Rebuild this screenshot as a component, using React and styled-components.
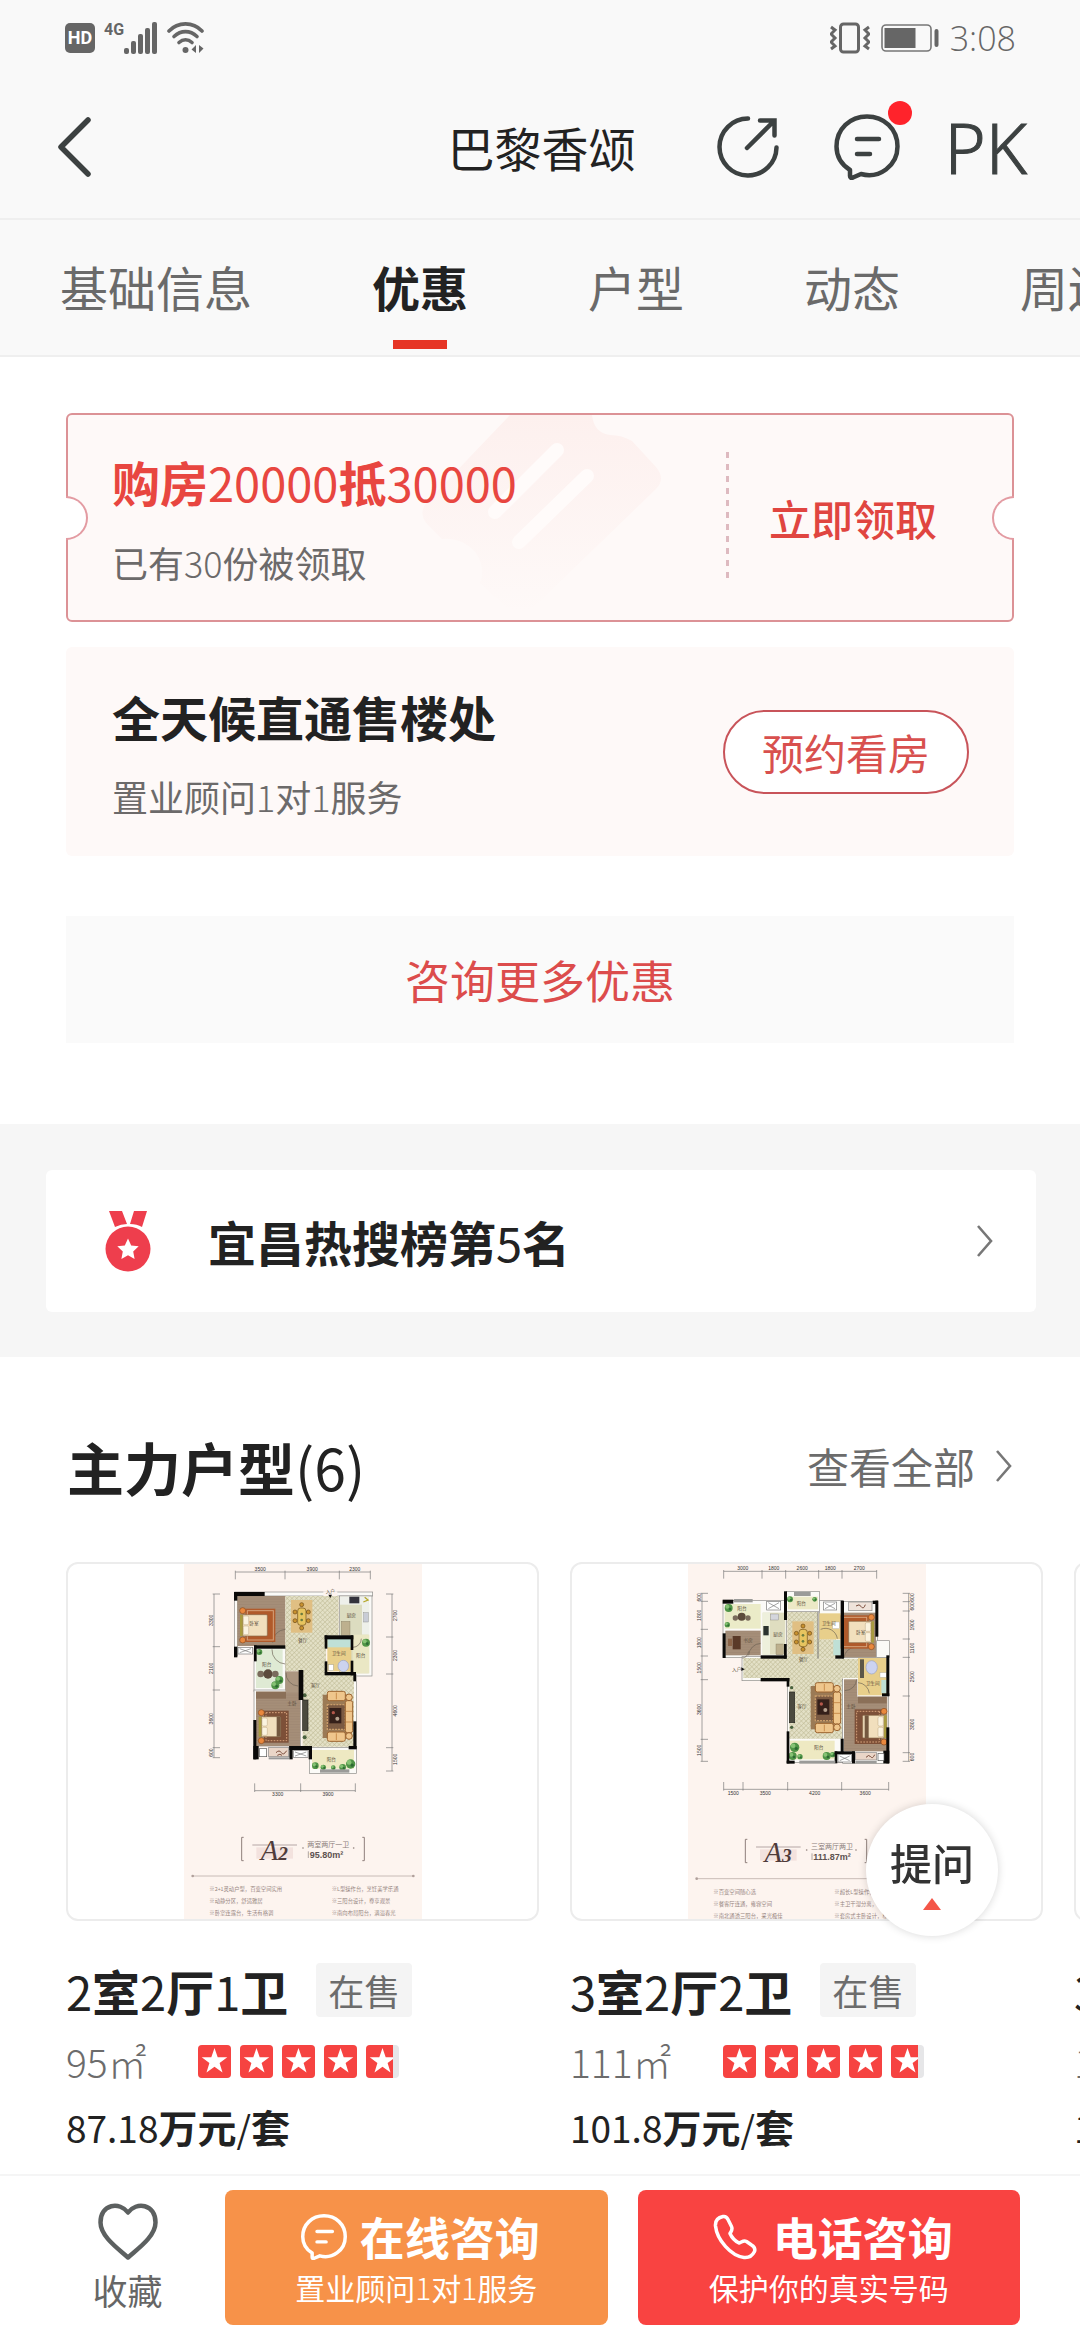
import React from "react";
import styled, { createGlobalStyle } from "styled-components";

const sans = `"Noto Sans CJK SC", "Noto Sans", sans-serif`;

const GlobalStyle = createGlobalStyle`
    * {
        box-sizing: border-box;
    }
    body {
        margin: 0;
        background: #fff;
        color: #222;
        font-family: ${sans};
    }
    button {
        font-family: inherit;
        color: inherit;
        padding: 0;
        border: none;
        background: none;
        cursor: pointer;
    }
    a {
        color: inherit;
        text-decoration: none;
    }
    h1, h2, h3, p {
        margin: 0;
    }
    svg {
        display: block;
        flex: none;
    }
`;

const Page = styled.div`
    min-height: 100vh;
    display: flex;
    flex-direction: column;
    overflow: hidden;
`;

const StatusBar = styled.div`
    height: 74px;
    padding: 2px 64px 0 65px;
    display: flex;
    align-items: center;
    justify-content: space-between;
    background: #f9f9f9;
    color: #666;
`;

const StatusGroup = styled.div`
    display: flex;
    align-items: center;
    gap: ${(p) => p.$gap}px;
`;

const HdBadge = styled.span`
    width: 30px;
    height: 30px;
    border-radius: 5px;
    background: #666;
    color: #fff;
    font: 700 18px/30px "Roboto", sans-serif;
    text-align: center;
`;

const Network = styled.span`
    display: flex;
    align-items: flex-start;
    font: 700 16px/16px "Roboto", sans-serif;
`;

const Clock = styled.time`
    font: 300 34px/40px "Open Sans", sans-serif;
`;

const Header = styled.header`
    height: 146px;
    padding: 2px 53px 0 56px;
    display: grid;
    grid-template-columns: 1fr auto 1fr;
    align-items: center;
    background: #f9f9f9;
    border-bottom: 2px solid #efefef;
`;

const HeaderTitle = styled.h1`
    font-size: 47px;
    line-height: 64px;
    font-weight: 400;
`;

const HeaderActions = styled.div`
    display: flex;
    align-items: center;
    justify-content: flex-end;
    gap: 55px;
`;

const IconButton = styled.button`
    position: relative;
    display: block;
    color: #3c4141;
`;

const UnreadDot = styled.span`
    position: absolute;
    top: -13px;
    right: -12px;
    width: 24px;
    height: 24px;
    border-radius: 50%;
    background: #ff232b;
`;

const PkButton = styled(IconButton)`
    margin-left: -10px;
    font: 300 70px/72px "Noto Sans", "Open Sans", sans-serif;
    -webkit-text-stroke: 1px #3c4141;
`;

const Tabs = styled.nav`
    display: flex;
    gap: 120px;
    padding: 34px 60px 6px;
    overflow: hidden;
    background: #f9f9f9;
    border-bottom: 2px solid #efefef;
`;

const Tab = styled.a`
    flex: none;
    display: flex;
    flex-direction: column;
    align-items: center;
    gap: 22px;
    font-size: 48px;
    line-height: 64px;
    font-weight: ${(p) => (p.$active ? 700 : 400)};
    color: ${(p) => (p.$active ? "#222" : "#6a6a6a")};

    &::after {
        content: "";
        width: 54px;
        height: 9px;
        background: ${(p) => (p.$active ? "#e63525" : "transparent")};
    }
`;

const Offers = styled.section`
    padding: 56px 66px 81px;
    display: flex;
    flex-direction: column;
    gap: 25px;
`;

const OfferCard = styled.div`
    position: relative;
    height: 209px;
    display: flex;
    align-items: center;
    padding-left: ${(p) => (p.$coupon ? 44 : 46)}px;
    border-radius: 6px;
    border: ${(p) => (p.$coupon ? "2px solid #dc9296" : "none")};
    background: #fef9f8;
`;

const Notch = styled.span`
    position: absolute;
    top: 81px;
    ${(p) => p.$side}: -2px;
    width: 22px;
    height: 44px;
    background: #fff;
    border: 2px solid #e39ba2;
    border-${(p) => p.$side}: none;
    border-radius: ${(p) => (p.$side === "left" ? "0 22px 22px 0" : "22px 0 0 22px")};
`;

// sits behind the coupon text
const Watermark = styled.svg`
    position: absolute;
    left: 340px;
    top: 0;
`;

const OfferText = styled.div`
    position: relative;
    flex: 1;
    display: flex;
    flex-direction: column;
    gap: 24px;
`;

const Title = styled.h3`
    font-size: 48px;
    line-height: 64px;
    font-weight: 700;
    color: ${(p) => (p.$red ? "#e84640" : "#222")};
    white-space: nowrap;
`;

const Num = styled.span`
    font-size: 47px;
    font-weight: 400;
`;

const Thin = styled.span`
    font-weight: 300;
`;

const Sub = styled.p`
    font-size: 36px;
    line-height: 48px;
    color: #6c6a6a;
`;

const DashedLine = styled.span`
    width: 3px;
    height: 126px;
    margin-bottom: 5px;
    background: repeating-linear-gradient(#debac0 0 6px, transparent 6px 12px);
`;

const ClaimButton = styled.button`
    position: relative;
    padding: 0 75px 0 40px;
    font-size: 42px;
    line-height: 56px;
    font-weight: 500;
    color: #e04540;
`;

const BookButton = styled.button`
    width: 246px;
    height: 84px;
    margin-right: 45px;
    border: 2px solid #c8545a;
    border-radius: 42px;
    background: #fff;
    color: #d8504e;
    font-size: 42px;
`;

const MoreButton = styled.button`
    height: 127px;
    margin-top: 35px;
    background: #fafafa;
    color: #dc4c4c;
    font-size: 45px;
`;

const Band = styled.section`
    padding: 46px 44px 45px 46px;
    background: #f6f6f6;
`;

const RankLink = styled.a`
    display: flex;
    align-items: center;
    height: 142px;
    padding: 0 42px 0 58px;
    border-radius: 6px;
    background: #fff;
`;

const RankText = styled.span`
    flex: 1;
    margin-left: 56px;
    font-size: 48px;
    line-height: 64px;
    font-weight: 700;
`;

const Section = styled.section`
    flex: 1;
    padding: 69px 0 8px 66px;
`;

const SectionHead = styled.div`
    display: flex;
    align-items: center;
    justify-content: space-between;
    height: 80px;
    padding: 0 67px 0 1px;
    margin-bottom: 56px;
`;

const SectionTitle = styled.h2`
    font-size: 57px;
    line-height: 80px;
    font-weight: 700;

    span {
        font-weight: 400;
    }
`;

const AllLink = styled.a`
    display: flex;
    align-items: center;
    gap: 20px;
    font-size: 42px;
    line-height: 56px;
    color: #6c6c6c;
`;

const Carousel = styled.div`
    display: flex;
    gap: 31px;
    padding-bottom: 12px;
    overflow: hidden;
`;

const House = styled.article`
    flex: none;
    width: 473px;
`;

const PlanBox = styled.div`
    height: 359px;
    display: flex;
    justify-content: center;
    border: 2px solid #ececec;
    border-radius: 12px;
    overflow: hidden;
`;

const HouseRow = styled.div`
    display: flex;
    align-items: center;
    height: ${(p) => p.$height}px;
    margin-top: ${(p) => p.$top}px;
    gap: ${(p) => p.$gap}px;
`;

const Tag = styled.span`
    padding: 0 12px;
    border-radius: 4px;
    background: #f4f4f4;
    color: #6c6c6c;
    font-size: 36px;
    line-height: 54px;
`;

const Area = styled.span`
    font-size: 39px;
    line-height: 48px;
    font-weight: 300;
    color: #6c6c6c;
`;

const Price = styled.p`
    margin-top: 17px;
    font-size: 39px;
    line-height: 48px;
    font-weight: 700;

    span {
        font-size: 37px;
        font-weight: 400;
    }
`;

const AskButton = styled.button`
    position: fixed;
    right: 82px;
    bottom: 404px;
    width: 132px;
    height: 132px;
    padding-top: 4px;
    display: flex;
    flex-direction: column;
    align-items: center;
    justify-content: center;
    gap: 8px;
    border-radius: 50%;
    background: #fff;
    box-shadow: 0 0 8px rgba(0, 0, 0, 0.16);
    color: #333;
    font-size: 42px;
    line-height: 56px;
    font-weight: 500;
`;

const BottomBar = styled.footer`
    display: flex;
    gap: 30px;
    padding: 14px 60px 15px;
    border-top: 2px solid #f5f5f5;
    background: #fff;
`;

const FavButton = styled.button`
    width: 135px;
    padding-top: 12px;
    display: flex;
    flex-direction: column;
    align-items: center;
    gap: 6px;
    color: #666;
    font-size: 35px;
    line-height: 48px;
`;

const CallButton = styled.button`
    flex: 1;
    height: 135px;
    padding-bottom: 2px;
    display: flex;
    flex-direction: column;
    align-items: center;
    justify-content: center;
    border-radius: 8px;
    background: ${(p) => p.$color};
    color: #fff;
    font-size: 30px;
    line-height: 40px;
`;

const CallTitle = styled.strong`
    display: flex;
    align-items: center;
    gap: ${(p) => p.$gap}px;
    padding-left: 8px;
    font-size: 45px;
    line-height: 60px;
    font-weight: 700;
`;

const SignalIcon = () => (
    <svg width="34" height="32" viewBox="0 0 34 32" fill="#666">
        <rect x="0" y="26" width="5" height="6" rx="2" />
        <rect x="7" y="19" width="5" height="13" rx="2" />
        <rect x="14" y="12" width="5" height="20" rx="2" />
        <rect x="21" y="6" width="5" height="26" rx="2" />
        <rect x="28" y="0" width="5" height="32" rx="2" />
    </svg>
);

const WifiIcon = () => (
    <svg width="38" height="32" viewBox="0 0 38 32" fill="none" stroke="#666" strokeWidth="3.6" strokeLinecap="round">
        <path d="M2 9C11-.5 26-.5 35 9" />
        <path d="M7 14.5c7-6.5 16-6.5 23 0" />
        <path d="M12 20.5c4-3.5 9-3.5 13 0" />
        <circle cx="18.5" cy="28" r="3" fill="#666" stroke="none" />
        <path d="M29 23v8l-4.500-3.500zM32 23v8l4.500-4.500z" fill="#666" stroke="none" />
    </svg>
);

const VibrateIcon = () => (
    <svg width="40" height="32" viewBox="0 0 40 32" fill="none" stroke="#666" strokeWidth="3">
        <rect x="10.5" y="2" width="18" height="28" rx="3" />
        <path d="M1 5l4 3-4 4 4 4-4 4 4 4-4 3" />
        <path d="M39 5l-4 3 4 4-4 4 4 4-4 4 4 3" />
    </svg>
);

const BatteryIcon = () => (
    <svg width="58" height="28" viewBox="0 0 58 28">
        <rect x="1" y="1" width="49" height="26" rx="4" fill="none" stroke="#777" strokeWidth="1.6" />
        <rect x="3.5" y="4" width="31" height="20" fill="#666" />
        <rect x="53.5" y="5" width="4" height="18" rx="2" fill="#666" />
    </svg>
);

const BackIcon = () => (
    <svg width="36" height="60" viewBox="0 0 36 60" fill="none" stroke="currentColor" strokeWidth="5.5" strokeLinecap="round" strokeLinejoin="round">
        <path d="M32 3L5 30l27 27" />
    </svg>
);

const ShareIcon = () => (
    <svg width="62" height="62" viewBox="0 0 62 62" fill="none" stroke="currentColor" strokeWidth="4.5" strokeLinecap="round">
        <path d="M31 2.500a28.500 28.500 0 1 0 28.500 29" />
        <path d="M30 32L57 5M43 4.500h14.500v15" />
    </svg>
);

const ChatIcon = ({ size = 66, stroke = 4.5 }) => (
    <svg width={size} height={size} viewBox="0 0 66 66" fill="none" stroke="currentColor" strokeWidth={stroke} strokeLinecap="round" strokeLinejoin="round">
        <path d="M16 56v6q0 2.500 3 1.500l8-3.500C45 65 63.500 52 63.500 32.500 63.500 15 50 2.500 33 2.500S2.500 15 2.500 32.500c0 10 5 18 13.500 23.500z" />
        <path d="M23 25h22M23 40h13" />
    </svg>
);

const ChevronIcon = () => (
    <svg width="18" height="32" viewBox="0 0 18 32" fill="none" stroke="#777" strokeWidth="2.6">
        <path d="M2 1l13 15L2 31" />
    </svg>
);

const starPath = "M16.5 3l3.200 9.200h9.600l-7.700 5.800 2.900 9.400-8-5.600-8 5.600 2.900-9.400L3.700 12.200h9.600z";

const MedalIcon = () => (
    <svg width="48" height="62" viewBox="0 0 48 62" fill="#ee3e4d">
        <path d="M5 1h13l5 13q-6 0-12 3zM30 1h13l-5 16q-5-3-12-3z" />
        <circle cx="24" cy="39" r="22.5" />
        <path d="M24 28.500l3.200 6.900 7.500.9-5.500 5.200 1.400 7.500-6.600-3.700-6.600 3.700 1.400-7.500-5.500-5.200 7.500-.9z" fill="#fff" />
    </svg>
);

const HeartIcon = () => (
    <svg width="60" height="58" viewBox="0 0 60 58" fill="none" stroke="#5c6060" strokeWidth="4.5" strokeLinejoin="round">
        <path d="M30 10.500C22-.5 2.500 1.500 2.500 20.500 2.500 35 22 48 30 55.500 38 48 57.500 35 57.500 20.500 57.500 1.500 38-.5 30 10.500z" />
    </svg>
);

const PhoneIcon = () => (
    <svg width="44" height="46" viewBox="0 0 44 46" fill="none" stroke="#fff" strokeWidth="3.5" strokeLinejoin="round">
        <path d="M10 2.500C5 3.500 2 6 2.500 12c1.500 14 15.500 30 28.500 31.500 5 .5 8-1 10.500-6 1-3-.5-5-3-6.500l-5-3.500c-3-1.500-4.500.5-7.500 1.500-4-2-7-5-9-9.500 1.500-2.500 3-4 1.500-7L15 5.500c-1-2-2.500-3.500-5-3z" />
    </svg>
);

// filled part of the five boxes follows the score
const Stars = ({ id, score }) => (
    <svg width="201" height="33" viewBox="0 0 201 33" role="img" aria-label={`${score}`}>
        {[0, 1, 2, 3, 4].map((i) => {
            const fill = Math.max(0, Math.min(1, score - i));
            return (
                <g key={i} transform={`translate(${i * 42} 0)`}>
                    <clipPath id={`${id}-${i}`}>
                        <rect width={33 * fill} height="33" />
                    </clipPath>
                    <rect width="33" height="33" rx="4" fill="#e6e6e8" />
                    <rect width="33" height="33" rx="4" fill="#f64341" clipPath={`url(#${id}-${i})`} />
                    <path d={starPath} fill="#fff" clipPath={`url(#${id}-${i})`} />
                </g>
            );
        })}
    </svg>
);

/* ---- floor plan drawings ---- */

const PlanDefs = () => (
    <defs>
        <pattern id="tile" width="10" height="10" patternUnits="userSpaceOnUse" patternTransform="rotate(45)">
            <rect width="10" height="10" fill="#e3e0c6" />
            <path d="M0 0h10M0 0v10" stroke="#bdb893" strokeWidth="3" />
        </pattern>
        <pattern id="wood" width="40" height="8" patternUnits="userSpaceOnUse">
            <rect width="40" height="8" fill="#a58e78" />
            <path d="M0 0h40" stroke="#97806b" strokeWidth="2" />
        </pattern>
    </defs>
);

const Box = ({ b, ...rest }) => <rect x={b[0]} y={b[1]} width={b[2]} height={b[3]} {...rest} />;

const Walls = ({ items }) => items.map((b, i) => <Box key={i} b={b} fill="#0a0908" />);

const ThinWalls = ({ items }) => items.map((b, i) => <Box key={i} b={b} fill="#fbfaf7" stroke="#8b8a88" strokeWidth="2" />);

const Bed = ({ x, y, w = 94, h = 88, flip, dark }) => (
    <g transform={flip ? `translate(${2 * x + w} 0) scale(-1 1)` : undefined}>
        <rect x={x + 8} y={y - 6} width={w - 4} height={h + 12} fill={dark ? "#7d5038" : "#b05a2b"} />
        <rect x={x + 14} y={y} width={w - 16} height={h} fill="none" stroke="#d6a27b" strokeWidth="3" strokeDasharray={dark ? "5 4" : "0"} />
        <rect x={x} y={y + 12} width={w - 20} height={h - 24} rx="3" fill="#f1dfbd" stroke="#8a6a4a" strokeWidth="2" />
        <rect x={x + 2} y={y + 16} width="16" height={(h - 36) / 2} rx="4" fill="#fbf3df" stroke="#a58a60" />
        <rect x={x + 2} y={y + 20 + (h - 36) / 2} width="16" height={(h - 36) / 2} rx="4" fill="#fbf3df" stroke="#a58a60" />
        {dark && <rect x={x + 46} y={y + 12} width="12" height={h - 24} fill="#74583f" />}
        <rect x={x - 8} y={y + 12} width="8" height={h - 24} fill="#a99b3f" />
        <circle cx={x} cy={y} r="9" fill="#e9883e" stroke="#8a4a1c" strokeWidth="2" />
        <circle cx={x} cy={y + h} r="9" fill="#e9883e" stroke="#8a4a1c" strokeWidth="2" />
    </g>
);

const Sofa = ({ x, y }) => (
    <g>
        <rect x={x} y={y + 10} width="72" height="130" fill="#9b7a55" />
        <rect x={x + 14} y={y + 40} width="54" height="74" fill="#7b5a42" stroke="#c99c69" strokeWidth="4" strokeDasharray="6 3" />
        <rect x={x + 20} y={y + 50} width="36" height="46" fill="#35201a" />
        <circle cx={x + 32} cy={y + 64} r="5" fill="#b5574b" />
        <circle cx={x + 44} cy={y + 82} r="6" fill="#b7a28f" />
        <g fill="#efc68c" stroke="#9c6430" strokeWidth="3">
            <rect x={x + 14} y={y} width="54" height="28" rx="6" />
            <rect x={x + 14} y={y + 122} width="54" height="28" rx="6" />
            <rect x={x + 68} y={y + 28} width="22" height="96" rx="6" />
            <circle cx={x + 79} cy={y + 18} r="10" />
            <circle cx={x + 79} cy={y + 134} r="10" />
        </g>
        <path d={`M${x + 70} ${y + 60}h18M${x + 70} ${y + 92}h18M${x + 41} ${y + 4}v20M${x + 41} ${y + 126}v20`} stroke="#c98d4c" strokeWidth="3" />
    </g>
);

const Dining = ({ x, y }) => (
    <g>
        <rect x={x} y={y} width="64" height="98" fill="#e0bf83" />
        <g fill="#c8912f" stroke="#6d4c17" strokeWidth="2">
            <circle cx={x + 32} cy={y + 14} r="6" />
            <circle cx={x + 32} cy={y + 84} r="6" />
            <circle cx={x + 12} cy={y + 36} r="6" />
            <circle cx={x + 12} cy={y + 62} r="6" />
            <circle cx={x + 52} cy={y + 36} r="6" />
            <circle cx={x + 52} cy={y + 62} r="6" />
            <rect x={x + 20} y={y + 24} width="25" height="52" rx="9" fill="#e7c45f" />
        </g>
        <circle cx={x + 32} cy={y + 42} r="4" fill="#6b7b3f" />
        <circle cx={x + 32} cy={y + 60} r="4" fill="#6b7b3f" />
    </g>
);

const Plants = ({ points }) => points.map(([x, y, r], i) => (
    <g key={i}>
        <circle cx={x} cy={y} r={r} fill="#4f9446" />
        <circle cx={x - r / 3} cy={y - r / 3} r={r / 2} fill="#86c274" />
        <circle cx={x + r / 3} cy={y + r / 4} r={r / 3} fill="#2d6a33" />
    </g>
));

const CrossBox = ({ b }) => (
    <g stroke="#777" strokeWidth="2" fill="#fff">
        <Box b={b} />
        <path d={`M${b[0] + 5} ${b[1] + 4}l${b[2] - 10} ${b[3] - 8}M${b[0] + 5} ${b[1] + b[3] - 4}l${b[2] - 10} ${8 - b[3]}`} />
    </g>
);

// dimension line: ticks at the stops, a number between each pair
const Ruler = ({ at, stops, labels, vertical, side = -1 }) => (
    <g stroke="#777" strokeWidth="2" fontSize="15" fontFamily="Liberation Sans, sans-serif" textAnchor="middle">
        {vertical ? <path d={`M${at} ${stops[0]}V${stops[stops.length - 1]}`} /> : <path d={`M${stops[0]} ${at}H${stops[stops.length - 1]}`} />}
        {stops.map((s) => (
            <path key={s} d={vertical ? `M${at - (side < 0 ? 4 : 18)} ${s}h22` : `M${s} ${at - (side < 0 ? 4 : 22)}v26`} />
        ))}
        {labels.map((t, i) => {
            const mid = (stops[i] + stops[i + 1]) / 2;
            return (
                <text key={i} stroke="none" fill="#333" transform={vertical ? `translate(${side < 0 ? at - 4 : at + 15} ${mid}) rotate(-90)` : `translate(${mid} ${side < 0 ? at - 4 : at + 16})`}>
                    {t}
                </text>
            );
        })}
    </g>
);

const RoomNames = ({ items }) => (
    <g fontSize="14" fill="#5c5140" textAnchor="middle" fontFamily={sans}>
        {items.map(([t, x, y]) => (
            <text key={t + x + y} x={x} y={y}>{t}</text>
        ))}
    </g>
);

const PlanCaption = ({ x, y, name, rooms, size, end }) => (
    <g>
        <path d={`M${x + 6} ${y}h-6v70h6M${end - 6} ${y}h6v70h-6`} fill="none" stroke="#8f7f7b" strokeWidth="3" />
        <rect x={x + 32} y={y + 20} width="134" height="6" fill="#d9cdca" />
        <rect x={x + 44} y={y + 30} width="110" height="34" fill="#f3e2de" />
        <text x={x + 98} y={y + 68} fontSize="86" fontStyle="italic" fill="#4f3b3a" textAnchor="middle" fontFamily="Liberation Serif, serif">
            {name[0]}
            <tspan fontSize="58" fontWeight="700">{name[1]}</tspan>
        </text>
        <circle cx={x + 184} cy={y + 32} r="2.5" fill="#8f7f7b" />
        <circle cx={end - 32} cy={y + 32} r="2.5" fill="#8f7f7b" />
        <text x={x + 197} y={y + 28} fontSize="21" fill="#8a7d7a" fontFamily={sans}>{rooms}</text>
        <text x={x + 204} y={y + 62} fontSize="27" fontWeight="700" fill="#5d5250" fontFamily="Liberation Sans, sans-serif">{size}</text>
        <path d={`M${x + 200} ${y + 42}v20`} stroke="#8a7d7a" strokeWidth="2" />
    </g>
);

const PlanNotes = ({ x, x2, y, left, right, end }) => (
    <g fontSize="16" fill="#96857f" fontFamily={sans}>
        <path d={`M${x - 50} ${y - 40}H${end}`} stroke="#b0a09b" strokeWidth="2" />
        <circle cx={x - 50} cy={y - 40} r="4" fill="#b0a09b" />
        <circle cx={end} cy={y - 40} r="4" fill="#b0a09b" />
        {left.map((t, i) => <text key={t} x={x} y={y + 6 + i * 36}>※{t}</text>)}
        {right.map((t, i) => <text key={t} x={x2} y={y + 6 + i * 36}>※{t}</text>)}
    </g>
);

const PlanA2 = () => (
    <svg width="238" height="358" viewBox="72 40 714 1074">
        <PlanDefs />
        <rect x="72" y="38" width="714" height="1080" fill="#fdf4ef" />
        <Ruler at={64} stops={[226, 375, 538, 631]} labels={["3500", "3900", "2300"]} />
        <Ruler vertical at={162} stops={[130, 288, 418, 591, 621]} labels={["3300", "2100", "3600", "600"]} />
        <Ruler vertical side={1} at={696} stops={[130, 259, 370, 591, 661]} labels={["2700", "2300", "4600", "1500"]} />
        <Ruler side={1} at={720} stops={[284, 422, 586]} labels={["3300", "3900"]} />

        <ThinWalls items={[[224, 124, 414, 12], [224, 136, 8, 180], [538, 136, 98, 240], [282, 292, 94, 130], [282, 418, 140, 168], [448, 590, 141, 78], [580, 372, 9, 220]]} />
        <Box b={[232, 136, 144, 150]} fill="url(#wood)" />
        <path d="M376 136h160v120h-38v110h84v222H428V362h-52z" fill="url(#tile)" />
        <Box b={[540, 138, 86, 230]} fill="#dcdcc0" />
        <Box b={[540, 138, 86, 24]} fill="#eef0ea" />
        <Box b={[606, 160, 22, 92]} fill="#eef0ea" />
        <Box b={[568, 138, 30, 20]} fill="#33333c" />
        <Box b={[611, 186, 14, 28]} fill="#c8ccd6" stroke="#777" />
        <Box b={[544, 212, 26, 42]} fill="#bdb08e" stroke="#7a7058" />
        <path d="M614 140l10 8-14 6" stroke="#b6a92e" strokeWidth="4" fill="none" />
        <Box b={[578, 252, 50, 116]} fill="#eae7c4" />
        <Box b={[502, 264, 72, 98]} fill="#e8cf8b" />
        <Box b={[502, 264, 72, 26]} fill="#bfe0d6" />
        <ellipse cx="550" cy="346" rx="16" ry="17" fill="#ccd3f0" stroke="#9aa3c6" strokeWidth="2" />
        <Box b={[506, 342, 14, 18]} fill="#fff" stroke="#888" />
        <Box b={[288, 296, 80, 116]} fill="#dfead4" />
        <Box b={[288, 422, 132, 164]} fill="url(#wood)" />
        <Box b={[376, 362, 44, 64]} fill="#ab9680" />
        <Box b={[288, 424, 90, 20]} fill="#8b7058" />
        <Box b={[456, 598, 126, 56]} fill="#eee9c2" />
        <path d="M376 236a40 40 0 0 0-38 40M336 296a42 42 0 0 0 40 44M378 366a38 38 0 0 0 36 40M578 290a26 26 0 0 0 26-26" fill="none" stroke="#6d6254" strokeWidth="2" />

        <Bed x={248} y={180} h={88} />
        <Bed x={304} y={486} h={84} w={78} dark />
        <Dining x={393} y={148} />
        <Sofa x={488} y={422} />
        <Box b={[428, 448, 16, 92]} fill="#4b4a3e" stroke="#262620" strokeWidth="2" />
        <circle cx="434" cy="434" r="6" fill="#48613c" />
        <circle cx="434" cy="560" r="6" fill="#48613c" />
        <circle cx="302" cy="370" r="10" fill="#7a6b5c" />
        <circle cx="324" cy="370" r="14" fill="#5c4a3c" />
        <circle cx="346" cy="370" r="10" fill="#7a6b5c" />
        <Plants points={[[298, 304, 9], [358, 388, 12], [346, 404, 12], [618, 276, 12], [466, 645, 10], [490, 650, 8], [548, 650, 10], [572, 640, 14], [520, 651, 7]]} />

        <Walls items={[[222, 124, 92, 12], [222, 124, 10, 26], [222, 288, 10, 32], [282, 284, 94, 10], [282, 284, 8, 48], [494, 254, 86, 12], [494, 254, 8, 40], [572, 254, 8, 44], [494, 364, 94, 10], [494, 332, 8, 34], [572, 330, 8, 44], [416, 358, 14, 90], [580, 366, 8, 26], [280, 508, 9, 118], [280, 586, 16, 40], [580, 512, 9, 82], [388, 586, 66, 12], [388, 586, 10, 40], [446, 586, 10, 40], [566, 586, 24, 10]]} />
        <CrossBox b={[234, 290, 44, 20]} />
        <CrossBox b={[400, 600, 44, 20]} />
        <Box b={[298, 594, 22, 24]} fill="#fff" stroke="#555" strokeWidth="2" />
        <Box b={[326, 590, 60, 28]} fill="#ead6c8" stroke="#888" strokeWidth="2" />
        <path d="M348 606q10-10 16 0t16-6M352 614q8-6 14 0" fill="none" stroke="#7a4b3a" strokeWidth="3" />
        <Box b={[326, 620, 62, 6]} fill="#999" />
        <Box b={[480, 656, 88, 10]} fill="#9b9b99" />
        <Box b={[490, 122, 42, 14]} fill="#fdf4ef" />
        <path d="M505 132h11l-5.500 10z" fill="#111" />
        <RoomNames items={[["入户", 511, 126], ["卧室", 282, 224], ["餐厅", 428, 274], ["厨房", 574, 198], ["卫生间", 536, 312], ["阳台", 602, 318], ["阳台", 320, 346], ["客厅", 466, 408], ["主卧", 396, 464], ["阳台", 514, 630]]} />
        <PlanCaption x={245} y={860} name="A2" rooms="两室两厅一卫" size="95.80m²" end={613} />
        <PlanNotes x={148} x2={515} y={1016} end={760} left={["2+1灵动户型，百变空间实用", "动静分区，舒适雅居", "卧室连露台，生活有格调"]} right={["L型操作台，烹饪美学乐通", "三阳台设计，尊享观景", "南向布局阳台，满溢春光"]} />
    </svg>
);

const PlanA3 = () => (
    <svg width="238" height="358" viewBox="56 40 714 1074">
        <rect x="56" y="38" width="714" height="1080" fill="#fdf4ef" />
        <Ruler at={62} stops={[163, 278, 349, 448, 518, 622]} labels={["3000", "1800", "2600", "1800", "2700"]} />
        <Ruler vertical at={98} stops={[128, 152, 236, 316, 387, 566, 632]} labels={["600", "1800", "1800", "1500", "3600", "1500"]} />
        <Ruler vertical side={1} at={718} stops={[128, 153, 181, 265, 320, 436, 606, 632]} labels={["600", "600", "1900", "1100", "2500", "3800", "600"]} />
        <Ruler side={1} at={716} stops={[163, 221, 355, 517, 658]} labels={["1500", "3500", "4200", "3600"]} />

        <ThinWalls items={[[161, 150, 190, 170], [350, 122, 100, 60], [450, 150, 70, 170], [520, 152, 104, 170], [218, 318, 142, 72], [622, 270, 38, 50], [520, 320, 138, 318], [354, 386, 166, 250]]} />
        <Box b={[166, 160, 108, 74]} fill="#ebebc8" />
        <Box b={[168, 240, 106, 74]} fill="url(#wood)" />
        <Box b={[280, 186, 68, 126]} fill="#dfddc0" />
        <Box b={[280, 186, 22, 126]} fill="#eef0dc" />
        <Box b={[282, 226, 16, 28]} fill="#2c3330" />
        <Box b={[304, 190, 24, 18]} fill="#d4d6dc" stroke="#777" />
        <Box b={[320, 280, 22, 32]} fill="#bdb08e" stroke="#7a7058" />
        <Box b={[356, 138, 90, 38]} fill="#ece9c6" />
        <path d="M354 184h92v140h74v60h-2v180H360V382H222v-60h132z" fill="url(#tile)" />
        <path d="M446 266h54v58h72v58h-54v-58h-72z" fill="url(#tile)" />
        <Box b={[450, 188, 64, 78]} fill="#e8cf8b" />
        <Box b={[492, 268, 22, 46]} fill="#bfe0d6" />
        <Box b={[490, 214, 20, 20]} fill="#fff" stroke="#999" />
        <Box b={[524, 186, 96, 134]} fill="url(#wood)" />
        <Box b={[566, 322, 86, 112]} fill="#e8cf8b" />
        <ellipse cx="607" cy="350" rx="17" ry="20" fill="#ccd3f0" stroke="#9aa3c6" strokeWidth="2" />
        <Box b={[632, 366, 20, 14]} fill="#fff" stroke="#999" />
        <Box b={[636, 388, 16, 40]} fill="#bfe0d6" />
        <Box b={[524, 386, 40, 60]} fill="url(#wood)" />
        <Box b={[524, 438, 130, 164]} fill="url(#wood)" />
        <Box b={[566, 438, 86, 20]} fill="#8b7058" />
        <Box b={[362, 570, 134, 56]} fill="#eee9c2" />
        <path d="M238 314a38 38 0 0 1 36-36M454 236a36 36 0 0 1 50 28M524 322a34 34 0 0 1 34-32M526 420a36 36 0 0 0 36-34M566 396a36 36 0 0 1 34 32M218 322q16 0 20-20" fill="none" stroke="#6d6254" strokeWidth="2" />
        <path d="M446 184v140" stroke="#777" strokeWidth="3" />

        <Bed x={518} y={200} h={88} w={88} flip />
        <Bed x={560} y={482} h={92} w={84} flip dark />
        <Dining x={369} y={212} />
        <Sofa x={424} y={396} />
        <Box b={[360, 424, 16, 92]} fill="#4b4a3e" stroke="#262620" strokeWidth="2" />
        <circle cx="367" cy="411" r="5" fill="#48613c" />
        <circle cx="367" cy="530" r="5" fill="#48613c" />
        <Box b={[572, 326, 12, 56]} fill="#5c5748" />
        <circle cx="198" cy="202" r="8" fill="#7a6b5c" />
        <circle cx="217" cy="198" r="12" fill="#5c4a3c" />
        <circle cx="236" cy="202" r="8" fill="#7a6b5c" />
        <Box b={[190, 256, 24, 40]} fill="#5a3a28" />
        <Box b={[176, 264, 12, 22]} fill="#8b6448" />
        <Plants points={[[178, 172, 12], [174, 222, 8], [362, 146, 9], [436, 146, 7], [376, 590, 14], [370, 616, 12], [392, 618, 8], [472, 616, 12], [490, 612, 8]]} />

        <Walls items={[[160, 147, 32, 12], [160, 248, 9, 74], [344, 122, 9, 86], [274, 314, 78, 10], [344, 280, 8, 44], [514, 150, 10, 172], [498, 314, 26, 10], [618, 150, 9, 108], [610, 150, 16, 10], [651, 314, 9, 122], [638, 428, 22, 9], [274, 382, 86, 10], [352, 382, 8, 26], [352, 542, 8, 96], [352, 630, 24, 9], [514, 564, 9, 40], [496, 602, 60, 9], [496, 602, 8, 36], [548, 602, 9, 36], [651, 530, 9, 108], [642, 600, 18, 38]]} />
        <CrossBox b={[292, 152, 42, 26]} />
        <CrossBox b={[462, 154, 40, 24]} />
        <CrossBox b={[506, 612, 40, 22]} />
        <Box b={[538, 154, 70, 26]} fill="#efe3da" stroke="#888" strokeWidth="2" />
        <path d="M560 166q10-8 16 2t12-6" fill="none" stroke="#7a4b3a" strokeWidth="3" />
        <Box b={[558, 606, 64, 22]} fill="#ead6c8" stroke="#888" strokeWidth="2" />
        <path d="M590 620q8-10 14-2t12-6" fill="none" stroke="#7a4b3a" strokeWidth="3" />
        <Box b={[626, 608, 18, 22]} fill="#fff" stroke="#555" strokeWidth="2" />
        <Box b={[194, 145, 56, 10]} fill="#9b9b99" />
        <Box b={[374, 124, 50, 12]} fill="#9b9b99" />
        <Box b={[390, 630, 108, 9]} fill="#9b9b99" />
        <Box b={[558, 631, 64, 7]} fill="#9b9b99" />
        <path d="M216 350v11l10-5.500z" fill="#111" />
        <RoomNames items={[["入户", 202, 360], ["阳台", 218, 178], ["书房", 236, 274], ["厨房", 326, 257], ["阳台", 396, 163], ["卫生间", 478, 222], ["卧室", 574, 249], ["餐厅", 402, 330], ["卫生间", 610, 402], ["客厅", 398, 473], ["主卧", 545, 473], ["阳台", 448, 596]]} />
        <PlanCaption x={228} y={866} name="A3" rooms="三室两厅两卫" size="111.87m²" end={592} />
        <PlanNotes x={132} x2={495} y={1024} end={744} left={["百变空间随心选", "餐客厅连通，雍容空间", "南北通透三阳台，采光极佳"]} right={["超长L型操作台，烹饪", "主卫干湿分离，尊享私密", "套房式主卧设计，尊崇"]} />
    </svg>
);

const tabs = ["基础信息", "优惠", "户型", "动态", "周边"];

const houses = [
    { id: "a2", rooms: [2, 2, 1], area: 95, price: "87.18", plan: <PlanA2 /> },
    { id: "a3", rooms: [3, 2, 2], area: 111, price: "101.8", plan: <PlanA3 /> },
    { id: "a4", rooms: [3, 2, 2], area: 118, price: "108.2", plan: null },
];

const HouseCard = ({ id, rooms, area, price, plan }) => (
    <House>
        <PlanBox>{plan}</PlanBox>
        <HouseRow $height={54} $top={42} $gap={28}>
            <Title>
                <Num>{rooms[0]}</Num>室<Num>{rooms[1]}</Num>厅<Num>{rooms[2]}</Num>卫
            </Title>
            <Tag>在售</Tag>
        </HouseRow>
        <HouseRow $height={48} $top={20} $gap={51}>
            <Area>{area}㎡</Area>
            <Stars id={id} score={4.82} />
        </HouseRow>
        <Price>
            <span>{price}</span>万元<span>/</span>套
        </Price>
    </House>
);

export default function App() {
    return (
        <Page>
            <GlobalStyle />
            <StatusBar>
                <StatusGroup $gap={9}>
                    <HdBadge>HD</HdBadge>
                    <Network>
                        4G
                        <SignalIcon />
                    </Network>
                    <WifiIcon />
                </StatusGroup>
                <StatusGroup $gap={11}>
                    <VibrateIcon />
                    <BatteryIcon />
                    <Clock>3:08</Clock>
                </StatusGroup>
            </StatusBar>

            <Header>
                <IconButton aria-label="返回">
                    <BackIcon />
                </IconButton>
                <HeaderTitle>巴黎香颂</HeaderTitle>
                <HeaderActions>
                    <IconButton aria-label="分享">
                        <ShareIcon />
                    </IconButton>
                    <IconButton aria-label="消息">
                        <ChatIcon />
                        <UnreadDot />
                    </IconButton>
                    <PkButton>PK</PkButton>
                </HeaderActions>
            </Header>

            <Tabs>
                {tabs.map((tab) => (
                    <Tab key={tab} href="#" $active={tab === "优惠"}>{tab}</Tab>
                ))}
            </Tabs>

            <Offers>
                <OfferCard $coupon>
                    <Watermark width="270" height="205" viewBox="0 0 270 205">
                        <defs>
                            <linearGradient id="fade" x1="0" y1="0" x2="0" y2="1">
                                <stop offset="0" stopColor="#fdf0ee" />
                                <stop offset="1" stopColor="#fef9f8" />
                            </linearGradient>
                        </defs>
                        <path d="M102 0L18 88q-8 12 2 22l14 14q20-2 34 14 10 16 4 30l28 26q14 8 28-4L248 74q10-10 0-22l-24-26q-10-6-22-6-16-2-18-20z" fill="url(#fade)" />
                        <path d="M149 35l-62 62M179 61l-68 66" stroke="#fffbfa" strokeWidth="14" strokeLinecap="round" />
                    </Watermark>
                    <Notch $side="left" />
                    <Notch $side="right" />
                    <OfferText>
                        <Title $red>
                            购房<Num>20000</Num>抵<Num>30000</Num>
                        </Title>
                        <Sub>
                            已有<Thin>30</Thin>份被领取
                        </Sub>
                    </OfferText>
                    <DashedLine />
                    <ClaimButton>立即领取</ClaimButton>
                </OfferCard>
                <OfferCard>
                    <OfferText>
                        <Title>全天候直通售楼处</Title>
                        <Sub>
                            置业顾问<Thin>1</Thin>对<Thin>1</Thin>服务
                        </Sub>
                    </OfferText>
                    <BookButton>预约看房</BookButton>
                </OfferCard>
                <MoreButton>咨询更多优惠</MoreButton>
            </Offers>

            <Band>
                <RankLink href="#">
                    <MedalIcon />
                    <RankText>
                        宜昌热搜榜第<Num>5</Num>名
                    </RankText>
                    <ChevronIcon />
                </RankLink>
            </Band>

            <Section>
                <SectionHead>
                    <SectionTitle>
                        主力户型<span>(6)</span>
                    </SectionTitle>
                    <AllLink href="#">
                        查看全部
                        <ChevronIcon />
                    </AllLink>
                </SectionHead>
                <Carousel>
                    {houses.map((house) => (
                        <HouseCard key={house.id} {...house} />
                    ))}
                </Carousel>
            </Section>

            <BottomBar>
                <FavButton>
                    <HeartIcon />
                    收藏
                </FavButton>
                <CallButton $color="#f79249">
                    <CallTitle $gap={13}>
                        <ChatIcon size={46} stroke={5} />
                        在线咨询
                    </CallTitle>
                    <span>
                        置业顾问<Thin>1</Thin>对<Thin>1</Thin>服务
                    </span>
                </CallButton>
                <CallButton $color="#f94341">
                    <CallTitle $gap={16}>
                        <PhoneIcon />
                        电话咨询
                    </CallTitle>
                    <span>保护你的真实号码</span>
                </CallButton>
            </BottomBar>

            <AskButton>
                提问
                <svg width="18" height="12" viewBox="0 0 18 12">
                    <path d="M9 0l9 12H0z" fill="#f45648" />
                </svg>
            </AskButton>
        </Page>
    );
}
